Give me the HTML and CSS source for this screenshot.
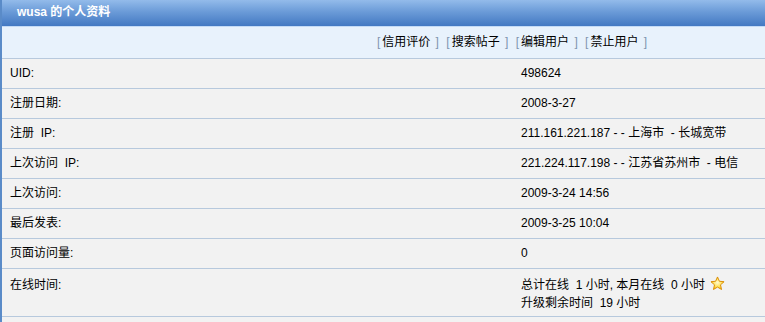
FILE: index.html
```html
<!DOCTYPE html>
<html lang="zh">
<head>
  <meta charset="UTF-8">
  <title>wusa 的个人资料</title>
  <link rel="stylesheet" href="styles.css">
</head>
<body>
  <div class="profile-box">
    <!-- Заголовок -->
    <div class="profile-title">wusa 的个人资料</div>
    <div class="profile-links">
      <span class="br">[</span><a href="#">信用评价</a> <span class="br">]</span>
      <span class="br">[</span><a href="#">搜索帖子</a> <span class="br">]</span>
      <span class="br">[</span><a href="#">编辑用户</a> <span class="br">]</span>
      <span class="br">[</span><a href="#">禁止用户</a> <span class="br">]</span>
    </div>
    <div class="profile-row"><div class="cell-label">UID:</div><div class="cell-val">498624</div></div>
    <div class="profile-row"><div class="cell-label">注册日期:</div><div class="cell-val">2008-3-27</div></div>
    <div class="profile-row"><div class="cell-label">注册&nbsp; IP:</div><div class="cell-val">211.161.221.187 - - 上海市&nbsp; - 长城宽带</div></div>
    <div class="profile-row"><div class="cell-label">上次访问&nbsp; IP:</div><div class="cell-val">221.224.117.198 - - 江苏省苏州市&nbsp; - 电信</div></div>
    <div class="profile-row"><div class="cell-label">上次访问:</div><div class="cell-val">2009-3-24 14:56</div></div>
    <div class="profile-row"><div class="cell-label">最后发表:</div><div class="cell-val">2009-3-25 10:04</div></div>
    <div class="profile-row"><div class="cell-label">页面访问量:</div><div class="cell-val">0</div></div>
    <div class="profile-row tall">
      <div class="cell-label">在线时间:</div>
      <div class="cell-val">
        <div>总计在线&nbsp; 1 小时, 本月在线&nbsp; 0 小时
          <svg class="star" width="15" height="15" viewBox="0 0 16 16">
            <defs>
              <radialGradient id="sg" cx="50%" cy="45%" r="60%">
                <stop offset="0" stop-color="#fffbd0"/>
                <stop offset="0.6" stop-color="#ffe050"/>
                <stop offset="1" stop-color="#f5b400"/>
              </radialGradient>
            </defs>
            <path d="M8 1 L10 5.6 L15 6.1 L11.2 9.4 L12.3 14.4 L8 11.8 L3.7 14.4 L4.8 9.4 L1 6.1 L6 5.6 Z" fill="url(#sg)" stroke="#d98a00" stroke-width="1" stroke-linejoin="round"/>
          </svg>
        </div>
        <div>升级剩余时间&nbsp; 19 小时</div>
      </div>
    </div>
    <div class="profile-row"><div class="cell-label">&nbsp;</div><div class="cell-val">&nbsp;</div></div>
  </div>
</body>
</html>
```
FILE: styles.css
```css
html, body {
  overflow: hidden;
}
body {
  margin: 0;
  background: #fff;
  font-family: Tahoma, "Liberation Sans", "Noto Sans CJK SC", sans-serif;
  font-size: 12px;
  color: #000;
}
.profile-box {
  width: 1020px;
  border-left: 2px solid #5a8bc8;
  background: #f2f2f2;
}
.profile-title {
  height: 26px;
  line-height: 25px;
  padding-left: 15px;
  color: #fff;
  font-weight: bold;
  font-size: 12px;
  background: linear-gradient(#93bbea, #6b9bd8 45%, #4379c2);
  border-bottom: 1px solid #c4dbf6;
}
.profile-links {
  height: 31px;
  line-height: 31px;
  text-align: center;
  background: #e8f2fc;
  border-bottom: 1px solid #b7c9dd;
}
.profile-links a {
  color: #000;
  text-decoration: none;
}
.profile-links .br {
  color: #7f95b0;
  padding: 0 2px;
}
.profile-row {
  display: flex;
  height: 29px;
  line-height: 29px;
  border-bottom: 1px solid #b7c9dd;
}
.profile-row.tall {
  height: 48px;
  line-height: 18px;
  padding-top: 7px;
  box-sizing: border-box;
}
.cell-label {
  width: 500px;
  padding-left: 8px;
}
.cell-val {
  flex: 1;
  padding-left: 11px;
}
.star {
  vertical-align: -2px;
  margin-left: 2px;
}
```
